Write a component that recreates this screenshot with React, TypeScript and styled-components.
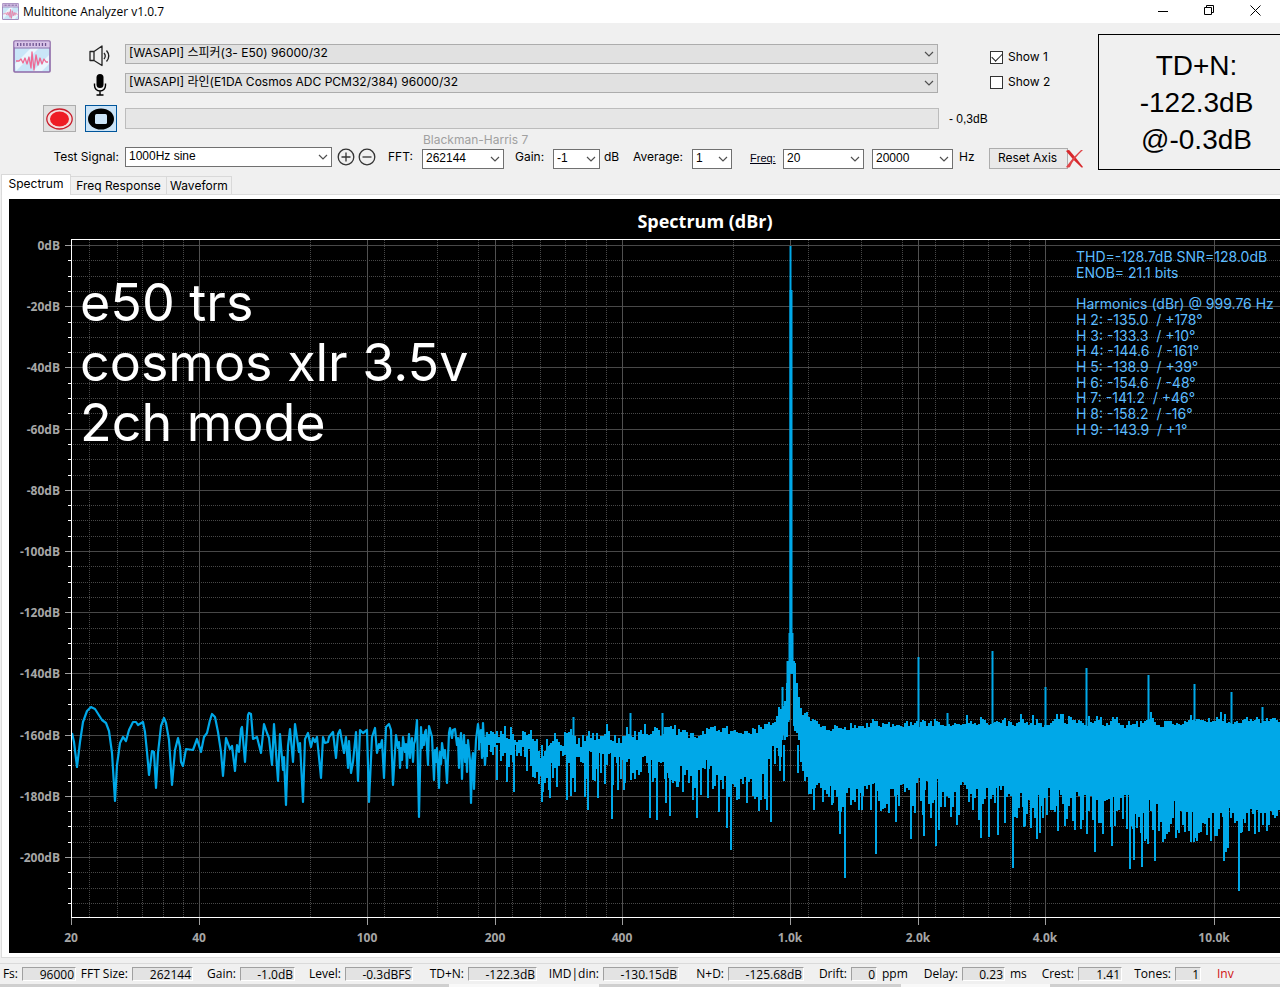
import React from "react";
import styled, { createGlobalStyle } from "styled-components";

const GlobalStyle = createGlobalStyle`
  * { box-sizing: border-box; }
  body { margin: 0; background: #f0f0f0; overflow-x: hidden; }
`;

const uiFont = `"Liberation Sans", "Noto Sans CJK KR", sans-serif`;
const wideFont = `Inter, "Noto Sans CJK KR", sans-serif`;
const segoe = `"Open Sans", "Noto Sans", sans-serif`;

const Window = styled.div`
  background: #f0f0f0;
  color: #000;
  font: 12px/14px ${uiFont};
  overflow: hidden;
`;

/* ---------- title bar ---------- */

const TitleBar = styled.header`
  display: flex;
  align-items: center;
  gap: 4px;
  height: 23px;
  padding-left: 2px;
  background: #fff;
`;

const Title = styled.h1`
  flex: 1;
  margin: 0;
  font: 12px/22px ${segoe};
`;

const CaptionButtons = styled.div`
  display: flex;
  padding: 0 2px 2px 0;
`;

const CaptionButton = styled.button`
  display: grid;
  place-items: center;
  width: 46px;
  height: 21px;
  padding: 0;
  border: 0;
  background: none;
`;

/* ---------- control area ---------- */

const Controls = styled.section`
  display: flex;
  align-items: flex-start;
  height: 150px;
`;

const ControlRows = styled.div`
  flex: 1;
  min-width: 0;
`;

const DeviceArea = styled.div`
  display: flex;
  padding-top: 17px;
`;

const LogoCell = styled.div`
  width: 85px;
  padding-left: 13px;
`;

const DeviceList = styled.div`
  flex: 1;
  display: flex;
  flex-direction: column;
  gap: 1px;
`;

const DeviceRow = styled.label`
  display: flex;
  align-items: center;
  height: 28px;
`;

const DeviceIcon = styled.span`
  display: grid;
  place-items: center;
  width: 40px;
  padding: 3px 10px 0 0;
`;

const ShowList = styled.div`
  display: flex;
  flex-direction: column;
  gap: 11px;
  width: 160px;
  padding: 10px 0 0 52px;
`;

const ShowOption = styled.label`
  display: flex;
  align-items: center;
  gap: 5px;
  height: 14px;
  font: 12px/14px ${wideFont};
`;

const TickBox = styled.input`
  appearance: none;
  display: grid;
  place-items: center;
  width: 13px;
  height: 13px;
  margin: 0;
  border: 1px solid #333;
  background: #fff;

  &:checked::after {
    content: "";
    width: 9px;
    height: 5px;
    border: solid #222;
    border-width: 0 0 1px 1px;
    transform: translateY(-1px) rotate(-45deg);
  }
`;

const Combo = styled.span<{ $disabled?: boolean }>`
  display: grid;
  flex: 1;
  align-items: center;
  height: 20px;
  border: 1px solid ${(p) => (p.$disabled ? "#acacac" : "#707070")};
  background: ${(p) => (p.$disabled ? "#e1e1e1" : "#fff")};

  > * {
    grid-area: 1 / 1;
  }

  > svg {
    justify-self: end;
    margin-right: 3px;
    pointer-events: none;
  }
`;

const Select = styled.select<{ $wide?: boolean }>`
  appearance: none;
  width: 100%;
  height: 18px;
  padding: 0 16px 2px 3px;
  border: 0;
  background: none;
  color: #000;
  font: 12px/16px ${(p) => (p.$wide ? wideFont : uiFont)};
`;

const TransportRow = styled.div`
  display: flex;
  align-items: center;
  height: 27px;
  margin-top: 8px;
  padding-left: 43px;
`;

const TransportButton = styled.button<{ $active?: boolean }>`
  display: grid;
  place-items: center;
  width: ${(p) => (p.$active ? 32 : 33)}px;
  height: 27px;
  margin-right: ${(p) => (p.$active ? 8 : 9)}px;
  padding: 0;
  border: 1px solid ${(p) => (p.$active ? "#00559b" : "#adadad")};
  background: ${(p) => (p.$active ? "#cce4f7" : "#e1e1e1")};
`;

const LevelBar = styled.div`
  flex: 1;
  height: 21px;
  border: 1px solid #bcbcbc;
  background: #e6e6e6;
`;

const LevelText = styled.output`
  width: 159px;
  padding-left: 10px;
`;

const SettingsRow = styled.div`
  display: grid;
  grid-template-columns: 125px 207px 56px 34px 82px 49px 47px 33px 59px 40px 51px 81px 8px 81px 36px 79px 20px;
  align-items: end;
  height: 37px;
  font-family: ${wideFont};
`;

const SettingLabel = styled.span<{ $indent?: number }>`
  height: 19px;
  padding-left: ${(p) => p.$indent ?? 0}px;
  white-space: nowrap;
`;

const SignalLabel = styled(SettingLabel)`
  padding-right: 6px;
  text-align: right;
`;

const SignalCombo = styled(Combo)`
  margin-bottom: 2px;
`;

const FftCell = styled.div`
  display: flex;
  flex-direction: column;
  gap: 2px;

  > ${Combo} {
    flex: none;
  }
`;

const WindowName = styled.span`
  height: 14px;
  padding-left: 1px;
  color: #a0a0a0;
  white-space: nowrap;
`;

const RoundButtons = styled.div`
  display: flex;
  gap: 3px;
  height: 21px;
  padding-left: 5px;
`;

const RoundButton = styled.button`
  display: block;
  width: 18px;
  height: 18px;
  padding: 0;
  border: 0;
  background: none;
`;

const FreqLink = styled.a`
  height: 18px;
  padding-left: 18px;
  color: #001;
  font: 11px/14px ${uiFont};
  text-decoration: underline;
`;

const ResetButton = styled.button`
  height: 21px;
  padding: 0 2px 2px 0;
  border: 1px solid #adadad;
  background: #e9e9e9;
  color: #000;
  font: 12px/16px ${wideFont};
  white-space: nowrap;
`;

const ClearButton = styled.button`
  display: block;
  width: 20px;
  height: 20px;
  margin-left: -3px;
  padding: 0;
  border: 0;
  background: none;
`;

const Readout = styled.output`
  display: block;
  width: 182px;
  height: 136px;
  margin-top: 11px;
  padding: 12px 0 0 14px;
  border: solid #000;
  border-width: 1px 0 1px 1px;
  font: 28px/37px "Liberation Sans", sans-serif;
  text-align: center;
  white-space: pre-line;
`;

/* ---------- tabs ---------- */

const TabStrip = styled.nav`
  display: flex;
  align-items: flex-end;
  height: 21px;
  padding-left: 1px;
`;

const Tab = styled.button<{ $active?: boolean; $width: number }>`
  position: relative;
  width: ${(p) => p.$width}px;
  height: ${(p) => (p.$active ? 21 : 18)}px;
  margin-bottom: ${(p) => (p.$active ? -1 : 0)}px;
  padding: 0 0 ${(p) => (p.$active ? 2 : 0)}px;
  border: solid #d9d9d9;
  border-width: 1px 1px 0 ${(p) => (p.$active ? 1 : 0)}px;
  background: ${(p) => (p.$active ? "#fff" : "#f0f0f0")};
  color: #000;
  font: 12px/16px ${wideFont};
  white-space: nowrap;
`;

const Panel = styled.main`
  margin-left: 1px;
  padding: 4px 0 4px 7px;
  border: solid #dcdcdc;
  border-width: 1px 0 1px 1px;
  background: #fff;
`;

/* ---------- chart ---------- */

const Chart = styled.div`
  position: relative;
  height: 754px;
  overflow: hidden;
  background: #000;
`;

const Plot = styled.svg`
  display: block;
  width: 100%;
  height: 100%;
`;

const Note = styled.p`
  position: absolute;
  top: 74px;
  left: 71px;
  margin: 0;
  color: #fff;
  font: 52px/60px Inter, sans-serif;
  white-space: pre-line;
`;

const Harmonics = styled.div`
  position: absolute;
  top: 50px;
  right: 7px;
  display: grid;
  grid-auto-rows: 1fr;
  align-items: center;
  width: 197px;
  height: 188px;
  color: #5cbcff;
  font: 14px/15px Inter, sans-serif;
  white-space: pre;
`;

/* ---------- status bar ---------- */

const StatusBar = styled.footer`
  display: flex;
  align-items: center;
  height: 20px;
  margin-top: 5px;
  border-top: 1px solid #dadada;
  font: 12px/16px ${segoe};
  white-space: nowrap;
`;

const StatusLabel = styled.label<{ $width: number }>`
  flex: none;
  width: ${(p) => p.$width}px;
  padding-right: 4px;
  text-align: right;
`;

const StatusValue = styled.output<{ $width: number }>`
  flex: none;
  width: ${(p) => p.$width}px;
  height: 14px;
  padding-right: 1px;
  border: 1px solid #fff;
  border-top-color: #a0a0a0;
  border-left-color: #a0a0a0;
  background: #e3e3e3;
  line-height: 13px;
  text-align: right;
`;

const StatusUnit = styled.span<{ $width: number }>`
  flex: none;
  width: ${(p) => p.$width}px;
  padding-left: 5px;
`;

const Invert = styled.span`
  padding-left: 16px;
  color: #d01010;
`;

const BottomStrip = styled.div`
  display: flex;
  height: 4px;
  padding-top: 1px;
`;

const StripPart = styled.span<{ $grow: number; $light?: boolean }>`
  flex: ${(p) => p.$grow};
  background: ${(p) => (p.$light ? "#f8f8f8" : "#cfcfcf")};
`;

/* ---------- chart data ---------- */

const FLOOR_LINE: [number, number][] = [
  [72, 733], [74, 742], [77, 767], [80, 742], [83, 722], [87, 711], [91, 707], [95, 709], [102, 720], [106, 723], [109, 731],
  [112, 753], [115, 801], [117, 765], [120, 743], [123, 737], [126, 741], [129, 730], [133, 722], [136, 722], [138, 725],
  [143, 722], [145, 732], [147, 752], [149, 775], [152, 751], [154, 752], [156, 788], [158, 753], [161, 726], [164, 718],
  [166, 723], [169, 740], [172, 785], [175, 750], [178, 738], [180, 747], [181, 762], [183, 766], [186, 749], [193, 750],
  [197, 739], [201, 752], [204, 737], [207, 733], [210, 720], [212, 714], [215, 717], [218, 732], [221, 752], [223, 776],
  [226, 738], [230, 749], [232, 746], [235, 771], [237, 745], [239, 752], [241, 729], [242, 727], [245, 762], [248, 715],
  [249, 713], [251, 714], [253, 739], [257, 737], [261, 753], [264, 724], [267, 733], [269, 738], [272, 765], [274, 724],
  [278, 781], [280, 734], [283, 770], [284, 757], [286, 805], [288, 746], [290, 729], [293, 762], [295, 724], [299, 752],
  [300, 743], [303, 802], [305, 739], [308, 733], [311, 747], [313, 738], [315, 742], [317, 737], [321, 778], [323, 737],
  [325, 743], [328, 742], [329, 737], [333, 732], [336, 758], [338, 734], [340, 730], [344, 753], [346, 737], [348, 768],
  [349, 741], [351, 773], [353, 762], [356, 732], [358, 781], [360, 730], [363, 733], [367, 730], [369, 802], [372, 737],
  [375, 728], [377, 753], [379, 744], [380, 748], [382, 740], [384, 778], [386, 727], [389, 724], [391, 730], [393, 785],
  [396, 735], [398, 748], [399, 742], [400, 768], [401, 748], [402, 760], [403, 737], [405, 752], [406, 744], [407, 768],
  [408, 746], [409, 734], [410, 758], [411, 744], [412, 738], [413, 762], [414, 744], [415, 741], [417, 720], [419, 817],
  [421, 727], [422, 748], [423, 735], [424, 745], [425, 732], [426, 730], [428, 765], [429, 726], [432, 737], [434, 780],
  [435, 750], [436, 762], [437, 748], [439, 788], [440, 752], [441, 764], [442, 743], [444, 758], [445, 750], [447, 783],
  [449, 733], [450, 728], [452, 738], [453, 730], [455, 729], [457, 745], [458, 738], [459, 768], [460, 742], [461, 733],
  [462, 779], [463, 745], [464, 735], [465, 762], [466, 745], [467, 772], [468, 740], [470, 760], [471, 803], [472, 762],
  [473, 753], [474, 789], [475, 760], [476, 740], [478, 724], [480, 742], [481, 730], [482, 758], [483, 723], [485, 765],
  [487, 732],
];

/* x, upper edge, lower edge, spread of the lower edge */
const BAND: [number, number, number, number][] = [
  [478, 727, 746, 10], [508, 726, 756, 12], [530, 732, 760, 14], [541, 746, 785, 12], [550, 738, 772, 18], [562, 732, 762, 14],
  [570, 727, 780, 18], [580, 735, 762, 16], [600, 731, 768, 20], [622, 731, 774, 16], [640, 727, 768, 16], [660, 726, 782, 22],
  [680, 729, 778, 14], [696, 736, 776, 20], [713, 727, 778, 18], [740, 727, 788, 14], [760, 723, 790, 18], [771, 719, 768, 22],
  [778, 706, 752, 14], [784, 700, 740, 12], [788, 665, 722, 6], [794, 665, 725, 6], [797, 690, 735, 8], [800, 708, 774, 14],
  [808, 716, 788, 10], [820, 723, 793, 12], [840, 728, 800, 14], [870, 725, 796, 16], [920, 723, 797, 20], [983, 722, 804, 22],
  [1046, 721, 807, 22], [1100, 720, 814, 22], [1150, 721, 819, 24], [1214, 719, 824, 18], [1280, 717, 818, 14],
  [2600, 717, 824, 16],
];

const DIPS: [number, number][] = [
  [497, 780], [507, 782], [514, 792], [533, 777], [542, 802], [550, 798], [557, 787], [567, 800], [575, 792], [585, 797],
  [588, 810], [598, 798], [612, 819], [618, 790], [624, 790], [650, 818], [657, 820], [666, 803], [670, 816], [678, 787],
  [693, 800], [697, 818], [708, 798], [719, 812], [727, 828], [731, 850], [747, 803], [759, 811], [767, 810], [771, 822],
  [780, 771], [784, 781], [798, 773], [814, 810], [832, 805], [840, 834], [845, 878], [862, 810], [876, 854], [896, 822],
  [911, 839], [924, 836], [936, 846], [939, 830], [957, 825], [981, 838], [989, 837], [998, 835], [1013, 868], [1024, 827],
  [1037, 839], [1040, 833], [1058, 831], [1095, 852], [1103, 834], [1112, 846], [1130, 869], [1134, 860], [1142, 867],
  [1148, 844], [1155, 861], [1165, 839], [1176, 838], [1194, 842], [1217, 836], [1224, 861], [1226, 852], [1228, 848],
  [1239, 891], [1242, 832],
];

const PEAKS: [number, number][] = [
  [573, 717], [630, 713], [662, 713], [782, 687], [918, 657], [947, 713], [992, 651], [1045, 687], [1086, 668], [1148, 675],
  [1194, 684], [1231, 692], [1262, 707],
];

function band(x: number) {
  let i = 1;
  while (i < BAND.length - 1 && BAND[i][0] < x) i++;
  const a = BAND[i - 1];
  const b = BAND[i];
  const t = (x - a[0]) / (b[0] - a[0]);
  return [1, 2, 3].map((k) => a[k] + (b[k] - a[k]) * t);
}

function noisePath() {
  let seed = 4711;
  const rand = () => {
    seed = (seed * 16807) % 2147483647;
    return seed / 2147483647;
  };
  let d = "";
  let wander = 0;
  for (let x = 478; x < 2600; x += 2) {
    const [top, bottom, spread] = band(x);
    if (x > 788 && x < 794) continue;
    wander = wander * 0.6 + (rand() - 0.5) * 6;
    const ragged = x < 640 ? 12 : x < 785 ? 7 : 3;
    const up = top + wander + rand() * ragged - (rand() > 0.88 ? 5 : 0);
    const low = bottom - spread + rand() * spread * 2;
    d += `M${x + 1} ${Math.round(up)}V${Math.round(low)}`;
  }
  return d;
}

const NOISE = noisePath();
const SPIKES =
  DIPS.map(([x, y]) => `M${x} 745V${y}`).join("") + PEAKS.map(([x, y]) => `M${x + 0.5} ${y}V740`).join("");

const X_MAJOR: [number, string][] = [
  [71, "20"], [199, "40"], [367, "100"], [495, "200"], [622, "400"], [790, "1.0k"], [918, "2.0k"], [1045, "4.0k"], [1214, "10.0k"],
];
const X_MINOR = [
  89, 117, 142, 163, 183, 310, 384, 437, 478, 512, 540, 565, 586, 606, 733, 808, 861, 902, 935, 963, 988, 1010, 1029,
];
const Y_LEVELS = Array.from({ length: 44 }, (_, i) => -i * 5);
const levelY = (db: number) => Math.round(245 - db * 3.06) + 0.5;

const HARMONICS = [
  "THD=-128.7dB SNR=128.0dB",
  "ENOB= 21.1 bits",
  " ",
  "Harmonics (dBr) @ 999.76 Hz",
  "H 2: -135.0  / +178°",
  "H 3: -133.3  / +10°",
  "H 4: -144.6  / -161°",
  "H 5: -138.9  / +39°",
  "H 6: -154.6  / -48°",
  "H 7: -141.2  / +46°",
  "H 8: -158.2  / -16°",
  "H 9: -143.9  / +1°",
];

const STATUS: { label: string; lw: number; value: string; vw: number; unit?: string; uw?: number }[] = [
  { label: "Fs:", lw: 22, value: "96000", vw: 54 },
  { label: "FFT Size:", lw: 56, value: "262144", vw: 61 },
  { label: "Gain:", lw: 47, value: "-1.0dB", vw: 55 },
  { label: "Level:", lw: 50, value: "-0.3dBFS", vw: 68 },
  { label: "TD+N:", lw: 55, value: "-122.3dB", vw: 69 },
  { label: "IMD|din:", lw: 66, value: "-130.15dB", vw: 76 },
  { label: "N+D:", lw: 49, value: "-125.68dB", vw: 76 },
  { label: "Drift:", lw: 47, value: "0", vw: 26, unit: "ppm", uw: 35 },
  { label: "Delay:", lw: 50, value: "0.23", vw: 43, unit: "ms", uw: 30 },
  { label: "Crest:", lw: 43, value: "1.41", vw: 44 },
  { label: "Tones:", lw: 53, value: "1", vw: 26 },
];

/* ---------- drawings ---------- */

const Logo = ({ size }: { size: number }) => (
  <svg width={size} height={size === 38 ? 33 : size} viewBox="0 0 38 33" preserveAspectRatio="none" aria-hidden="true">
    <rect x="1" y="1" width="36" height="31" rx="1" fill="#c9e6f8" stroke="#8e6aa8" strokeWidth="1.6" />
    <path d="M2 24L18 8h8L3 31zM20 31L36 15v9l-7 7z" fill="#eaf6fd" />
    <path d="M1.500 1.500h35v6h-35z" fill="#d9c4e8" />
    <path d="M4 4.500h30" stroke="#6d5490" strokeWidth="3" strokeDasharray="1.300 1.800" />
    <path d="M1 8h36" stroke="#8e6aa8" strokeWidth="1.200" />
    <path
      d="M3 21h3l2-2 2 4 2-5 2 6 2-7 2 11 1-16 2 18 2-15 2 10 2-7 2 6 2-5 2 3h2"
      fill="none"
      stroke="#ee6a94"
      strokeWidth="1.300"
      strokeLinejoin="round"
    />
  </svg>
);

const Chevron = () => (
  <svg width="10" height="6" viewBox="0 0 10 6" aria-hidden="true">
    <path d="M1 1l4 4 4-4" fill="none" stroke="#505050" strokeWidth="1.200" />
  </svg>
);

const SpeakerIcon = () => (
  <svg width="24" height="24" viewBox="0 0 24 24" fill="none" stroke="#222" strokeWidth="1.300" aria-hidden="true">
    <path d="M6 7.500H2v9h4M6 7.500v9l8 5V2z" strokeLinejoin="round" />
    <path d="M16 9q2.500 3 0 6M18.500 6.500q4.500 5.500 0 11" />
  </svg>
);

const MicIcon = () => (
  <svg width="14" height="22" viewBox="0 0 14 22" fill="none" stroke="#000" strokeWidth="1.400" aria-hidden="true">
    <rect x="3.500" y="0" width="7" height="14" rx="3.500" fill="#000" stroke="none" />
    <path d="M1.500 9.500v2a5.500 5.500 0 0 0 11 0v-2M7 17v4M3.500 21h7" />
  </svg>
);

const Dropdown = ({ id, value, disabled }: { id: string; value: string; disabled?: boolean }) => (
  <Combo $disabled={disabled}>
    <Select id={id} aria-label={id} defaultValue={value} $wide={disabled}>
      <option>{value}</option>
    </Select>
    <Chevron />
  </Combo>
);

const SpectrumPlot = () => (
  <Plot role="img" aria-label="Spectrum">
    <g transform="translate(-9 -199)">
      <g shapeRendering="crispEdges" strokeWidth="1">
        {X_MINOR.map((x) => (
          <path key={x} d={`M${x + 0.5} 240V917`} stroke="#484848" strokeDasharray="1 1" />
        ))}
        {Y_LEVELS.map((db) => (
          <path
            key={db}
            d={`M71 ${levelY(db)}H2600`}
            stroke="#484848"
            strokeDasharray={db % 20 ? "1 1" : undefined}
          />
        ))}
        {X_MAJOR.map(([x]) => (
          <path key={x} d={`M${x + 0.5} 240V925`} stroke="#505050" />
        ))}
        {X_MAJOR.map(([x]) => (
          <path key={x} d={`M${x + 0.5} 918V925`} stroke="#a0a0a0" />
        ))}
        {Y_LEVELS.map((db) => (
          <path key={db} d={`M${db % 20 ? 68 : 65} ${levelY(db)}H71`} stroke={db % 20 ? "#fff" : "#a0a0a0"} />
        ))}
      </g>
      <g fill="none" stroke="#00a8e8">
        <polyline points={FLOOR_LINE.map((p) => p.join(",")).join(" ")} strokeWidth="2.2" strokeLinejoin="round" />
        <path d={NOISE} strokeWidth="2" />
        <path d={SPIKES} strokeWidth="2" />
        <path d="M790.500 246V672" strokeWidth="2" />
        <path d="M791 290V672" strokeWidth="3" />
        <path d="M791 633V673" strokeWidth="5" />
        <path d="M791 661V674" strokeWidth="8" />
        <path d="M788 661V722M794.500 672V726" strokeWidth="3" />
      </g>
      <path d="M2600 239.500H71.500V917.500H2600" fill="none" stroke="#fff" shapeRendering="crispEdges" />
      <g fill="#a6a6a6" fontFamily={segoe} fontSize="12" fontWeight="700">
        {Y_LEVELS.filter((db) => db % 20 === 0).map((db) => (
          <text key={db} x="60" y={levelY(db) + 4} textAnchor="end">
            {`${db === 0 ? 0 : db}dB`}
          </text>
        ))}
        {X_MAJOR.map(([x, name]) => (
          <text key={x} x={x} y="942" textAnchor="middle">
            {name}
          </text>
        ))}
      </g>
      <text x="705" y="228" textAnchor="middle" fill="#fff" fontFamily={segoe} fontSize="18" fontWeight="700">
        Spectrum (dBr)
      </text>
    </g>
  </Plot>
);

export default function App() {
  return (
    <Window>
      <GlobalStyle />
      <TitleBar>
        <Logo size={17} />
        <Title>Multitone Analyzer v1.0.7</Title>
        <CaptionButtons>
          <CaptionButton aria-label="Minimize">
            <svg width="10" height="10">
              <path d="M0 5.500h10" stroke="#000" />
            </svg>
          </CaptionButton>
          <CaptionButton aria-label="Restore">
            <svg width="11" height="11" fill="none" stroke="#000">
              <path d="M.5 2.500h7v7h-7zM2.500 2.500v-2h7v7h-2" />
            </svg>
          </CaptionButton>
          <CaptionButton aria-label="Close">
            <svg width="11" height="11">
              <path d="M.5 .5l10 10M10.500 .5l-10 10" stroke="#000" />
            </svg>
          </CaptionButton>
        </CaptionButtons>
      </TitleBar>

      <Controls>
        <ControlRows>
          <DeviceArea>
            <LogoCell>
              <Logo size={38} />
            </LogoCell>
            <DeviceList>
              <DeviceRow>
                <DeviceIcon>
                  <SpeakerIcon />
                </DeviceIcon>
                <Dropdown id="Output device" value="[WASAPI] 스피커(3- E50) 96000/32" disabled />
              </DeviceRow>
              <DeviceRow>
                <DeviceIcon>
                  <MicIcon />
                </DeviceIcon>
                <Dropdown id="Input device" value="[WASAPI] 라인(E1DA Cosmos ADC PCM32/384) 96000/32" disabled />
              </DeviceRow>
            </DeviceList>
            <ShowList>
              <ShowOption>
                <TickBox type="checkbox" defaultChecked />
                Show 1
              </ShowOption>
              <ShowOption>
                <TickBox type="checkbox" />
                Show 2
              </ShowOption>
            </ShowList>
          </DeviceArea>

          <TransportRow>
            <TransportButton aria-label="Record">
              <svg width="27" height="22">
                <ellipse cx="13.500" cy="11" rx="12.700" ry="10" fill="#f4dede" stroke="#c81e2c" strokeWidth="1.300" />
                <ellipse cx="13.500" cy="11" rx="9.500" ry="7.500" fill="#ee1c24" />
              </svg>
            </TransportButton>
            <TransportButton aria-label="Stop" $active>
              <svg width="28" height="22">
                <ellipse cx="14" cy="11" rx="13" ry="10.500" fill="#000" />
                <rect x="8" y="6" width="12" height="10" rx="1.500" fill="#cce4f7" />
              </svg>
            </TransportButton>
            <LevelBar role="meter" aria-label="Level" />
            <LevelText>- 0,3dB</LevelText>
          </TransportRow>

          <SettingsRow>
            <SignalLabel as="label" htmlFor="Test signal">
              Test Signal:
            </SignalLabel>
            <SignalCombo>
              <Select id="Test signal">
                <option>1000Hz sine</option>
              </Select>
              <Chevron />
            </SignalCombo>
            <RoundButtons>
              <RoundButton aria-label="Add">
                <svg width="18" height="18" fill="none" stroke="#333" strokeWidth="1.300">
                  <circle cx="9" cy="9" r="7.800" />
                  <path d="M4.500 9h9M9 4.500v9" />
                </svg>
              </RoundButton>
              <RoundButton aria-label="Remove">
                <svg width="18" height="18" fill="none" stroke="#333" strokeWidth="1.300">
                  <circle cx="9" cy="9" r="7.800" />
                  <path d="M4.500 9h9" />
                </svg>
              </RoundButton>
            </RoundButtons>
            <SettingLabel as="label" htmlFor="FFT">
              FFT:
            </SettingLabel>
            <FftCell>
              <WindowName>Blackman-Harris 7</WindowName>
              <Dropdown id="FFT" value="262144" />
            </FftCell>
            <SettingLabel as="label" htmlFor="Gain" $indent={11}>
              Gain:
            </SettingLabel>
            <Dropdown id="Gain" value="-1" />
            <SettingLabel $indent={4}>dB</SettingLabel>
            <SettingLabel as="label" htmlFor="Average">
              Average:
            </SettingLabel>
            <Dropdown id="Average" value="1" />
            <FreqLink href="#freq">Freq:</FreqLink>
            <Dropdown id="Lowest frequency" value="20" />
            <span />
            <Dropdown id="Highest frequency" value="20000" />
            <SettingLabel $indent={6}>Hz</SettingLabel>
            <ResetButton>Reset Axis</ResetButton>
            <ClearButton aria-label="Clear">
              <svg width="20" height="20">
                <path d="M1 2q3-2 4 0 7 8 13 16-1 1-2 0Q8 11 1 2z" fill="#d8282c" />
                <path d="M18 1q-9 8-13 17-2 1-4 0Q8 8 16 1z" fill="#e04448" />
              </svg>
            </ClearButton>
          </SettingsRow>
        </ControlRows>
        <Readout>{"TD+N:\n-122.3dB\n@-0.3dB"}</Readout>
      </Controls>

      <TabStrip>
        <Tab $active $width={70}>
          Spectrum
        </Tab>
        <Tab $width={96}>Freq Response</Tab>
        <Tab $width={65}>Waveform</Tab>
      </TabStrip>
      <Panel>
        <Chart>
          <SpectrumPlot />
          <Note>{"e50 trs\ncosmos xlr 3.5v\n2ch mode"}</Note>
          <Harmonics>
            {HARMONICS.map((line, i) => (
              <span key={i}>{line}</span>
            ))}
          </Harmonics>
        </Chart>
      </Panel>

      <StatusBar>
        {STATUS.map((s) => (
          <React.Fragment key={s.label}>
            <StatusLabel htmlFor={`status-${s.label}`} $width={s.lw}>
              {s.label}
            </StatusLabel>
            <StatusValue id={`status-${s.label}`} $width={s.vw}>
              {s.value}
            </StatusValue>
            {s.unit && <StatusUnit $width={s.uw ?? 0}>{s.unit}</StatusUnit>}
          </React.Fragment>
        ))}
        <Invert>Inv</Invert>
      </StatusBar>
      <BottomStrip>
        <StripPart $grow={449} />
        <StripPart $grow={150} $light />
        <StripPart $grow={302} />
        <StripPart $grow={149} $light />
        <StripPart $grow={230} />
      </BottomStrip>
    </Window>
  );
}
